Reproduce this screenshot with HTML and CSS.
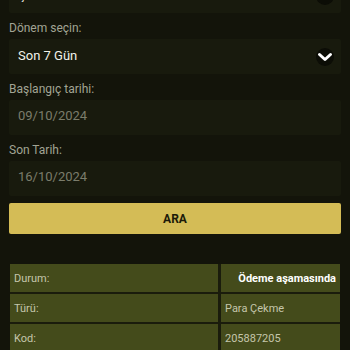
FILE: index.html
```html
<!DOCTYPE html>
<html lang="tr">
<head>
<meta charset="utf-8">
<link rel="stylesheet" href="styles.css">
</head>
<body>
<div class="page">
  <div class="field">
    <div class="label">İşlem türü:</div>
    <div class="box select">
      <span class="value">Çekim</span>
      <svg class="chev" width="18" height="18" viewBox="0 0 18 18"><circle cx="9" cy="9" r="9" fill="#0c0d06"/><polyline points="3.5,6.5 9,11.5 14.5,6.5" fill="none" stroke="#ffffff" stroke-width="3" stroke-linecap="round" stroke-linejoin="round"/></svg>
    </div>
  </div>
  <div class="field">
    <div class="label">Dönem seçin:</div>
    <div class="box select">
      <span class="value">Son 7 Gün</span>
      <svg class="chev" width="18" height="18" viewBox="0 0 18 18"><circle cx="9" cy="9" r="9" fill="#0c0d06"/><polyline points="3.5,6.5 9,11.5 14.5,6.5" fill="none" stroke="#ffffff" stroke-width="3" stroke-linecap="round" stroke-linejoin="round"/></svg>
    </div>
  </div>
  <div class="field">
    <div class="label">Başlangıç tarihi:</div>
    <div class="box date">09/10/2024</div>
  </div>
  <div class="field">
    <div class="label">Son Tarih:</div>
    <div class="box date">16/10/2024</div>
  </div>
  <button class="btn">ARA</button>
  <div class="tbl">
    <div class="cell">Durum:</div>
    <div class="cell strong">Ödeme aşamasında</div>
    <div class="cell">Türü:</div>
    <div class="cell">Para Çekme</div>
    <div class="cell">Kod:</div>
    <div class="cell">205887205</div>
  </div>
</div>
</body>
</html>
```
FILE: styles.css
```css
html, body {
  margin: 0;
  padding: 0;
  background: #13140a;
  font-family: Roboto, "Noto Sans", sans-serif;
  overflow: hidden;
}
.page {
  padding: 0 9px;
  margin-top: -41px;
}
.field {
  margin-bottom: 7px;
}
.label {
  font-size: 12px;
  line-height: 16px;
  height: 16px;
  color: #a2a494;
  margin-bottom: 3px;
}
.box {
  height: 35px;
  box-sizing: border-box;
  background: #181a0d;
  border-radius: 2px;
  display: flex;
  align-items: center;
  padding-left: 9px;
}
.select {
  padding-bottom: 2px;
  padding-right: 7px;
}
.select .value {
  font-size: 13px;
  color: #f2f2ea;
}
.chev {
  margin-left: auto;
  margin-top: 2px;
}
.date {
  font-size: 13px;
  color: #7b7c6b;
  padding-bottom: 4px;
}
.btn {
  display: block;
  width: 100%;
  height: 31px;
  border: none;
  border-radius: 2px;
  background: #d4bc56;
  color: #1c1a08;
  font-family: Roboto, "Noto Sans", sans-serif;
  font-weight: 700;
  font-size: 12px;
  padding: 0;
  margin: 0;
}
.tbl {
  margin: 30px 0 0 1px;
  width: 330px;
  display: grid;
  grid-template-columns: 208px 1fr;
  grid-auto-rows: 28px;
  gap: 2px 3px;
  background: #1a1c0c;
}
.cell {
  background: #444b1b;
  color: #c4c6ab;
  font-size: 11px;
  display: flex;
  align-items: center;
  padding-left: 4px;
}
.cell.strong {
  justify-content: flex-end;
  padding-right: 4px;
  font-weight: 700;
  color: #ffffff;
}
```
